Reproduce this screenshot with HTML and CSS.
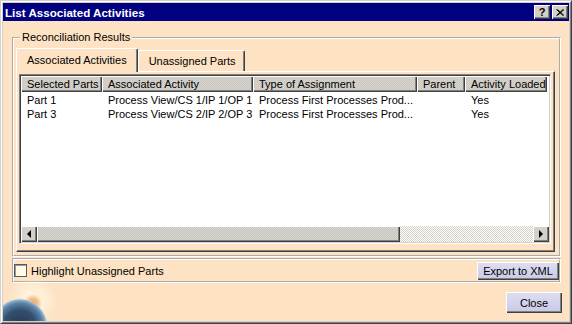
FILE: index.html
```html
<!DOCTYPE html>
<html lang="en">
<head>
  <meta charset="UTF-8" />
  <meta name="viewport" content="width=device-width, initial-scale=1.0"/>
  <title>List Associated Activities</title>
  <link rel="stylesheet" href="styles.css">
</head>
<body>
  <div class="window">
    <div class="titlebar">
      <span class="title">List Associated Activities</span>
      <div class="caption-buttons">
        <span class="caption-btn">?</span>
        <span class="caption-btn">
          <svg width="8" height="7" viewBox="0 0 8 7">
            <path d="M0.5 0.5 L7 6.5 M1.5 0.5 L8 6.5 M7 0.5 L0.5 6.5 M8 0.5 L1.5 6.5" stroke="#000" stroke-width="1" fill="none"/>
          </svg>
        </span>
      </div>
    </div>

    <div class="client">
      <fieldset class="group">
        <legend>Reconciliation Results</legend>

        <div class="tabs">
          <div class="tab active">Associated Activities</div>
          <div class="tab">Unassigned Parts</div>
        </div>

        <div class="panel">
          <div class="list">
            <div class="grid-area">
              <table class="grid">
                <colgroup>
                  <col style="width: 81px">
                  <col style="width: 151px">
                  <col style="width: 164px">
                  <col style="width: 48px">
                  <col style="width: 82px">
                </colgroup>
                <thead>
                  <tr>
                    <th>Selected Parts</th>
                    <th>Associated Activity</th>
                    <th>Type of Assignment</th>
                    <th>Parent</th>
                    <th>Activity Loaded</th>
                  </tr>
                </thead>
                <tbody>
                  <tr>
                    <td>Part 1</td>
                    <td>Process View/CS 1/IP 1/OP 1</td>
                    <td>Process First Processes Prod...</td>
                    <td></td>
                    <td>Yes</td>
                  </tr>
                  <tr>
                    <td>Part 3</td>
                    <td>Process View/CS 2/IP 2/OP 3</td>
                    <td>Process First Processes Prod...</td>
                    <td></td>
                    <td>Yes</td>
                  </tr>
                </tbody>
              </table>
            </div>

            <div class="hscroll">
              <span class="sb-btn"><span class="arrow left"></span></span>
              <span class="sb-thumb"></span>
              <span class="sb-track"></span>
              <span class="sb-btn"><span class="arrow right"></span></span>
            </div>
          </div>
        </div>
      </fieldset>

      <div class="options">
        <label class="check"><span class="box"></span>Highlight Unassigned Parts</label>
        <button class="btn export">Export to XML</button>
      </div>

      <div class="footer">
        <button class="btn close">Close</button>
      </div>

      <div class="globe"></div>
    </div>
  </div>
</body>
</html>
```

FILE: styles.css
```css
* {
  box-sizing: border-box;
}

body {
  margin: 0;
  font-family: "Liberation Sans", Arial, sans-serif;
  font-size: 11px;
  color: #000;
  background: #d4d0c8;
}

.window {
  width: 572px;
  height: 324px;
  display: flex;
  flex-direction: column;
  padding: 2px;
  background: #d4d0c8;
  border: 1px solid;
  border-color: #d4d0c8 #404040 #404040 #d4d0c8;
  box-shadow: inset 1px 1px 0 #fff, inset -1px -1px 0 #808080;
}

/* title bar */
.titlebar {
  height: 18px;
  flex-shrink: 0;
  display: flex;
  align-items: center;
  justify-content: space-between;
  padding: 0 1px 0 2px;
  background: #000080;
}

.title {
  color: #fff;
  font-weight: bold;
  font-size: 11.6px;
}

.caption-buttons {
  display: flex;
  gap: 2px;
}

.caption-btn {
  width: 16px;
  height: 14px;
  display: flex;
  align-items: center;
  justify-content: center;
  background: #d4d0c8;
  font-weight: bold;
  font-size: 11px;
  line-height: 1;
  box-shadow: inset 1px 1px 0 #fff, inset -1px -1px 0 #404040, inset -2px -2px 0 #808080;
}

/* dialog body */
.client {
  flex: 1;
  position: relative;
  display: flex;
  flex-direction: column;
  background: #fde3c3;
  overflow: hidden;
}

.group {
  margin: 10px 8px 0 9px;
  padding: 4px 4px 3px 2px;
  border: 2px groove #fff;
  min-width: 0;
}

.group legend {
  margin-left: 4px;
  padding: 0 2px;
  line-height: 13px;
}

/* tabs */
.tabs {
  height: 23px;
  display: flex;
  align-items: flex-start;
}

.tab {
  height: 21px;
  margin-top: 2px;
  padding: 0 9px 0 10px;
  display: flex;
  align-items: center;
  background: #fde3c3;
  border-top: 1px solid #fff;
  border-left: 1px solid #fff;
  border-right: 1px solid #404040;
  border-radius: 2px 2px 0 0;
  box-shadow: inset -1px 0 0 #808080;
}

.tab.active {
  height: 24px;
  margin-top: 0;
  padding: 0 10px 2px;
  position: relative;
  z-index: 1;
}

.panel {
  height: 181px;
  padding: 2px 3px 5px 2px;
  border-top: 1px solid #fff;
  border-left: 1px solid #fff;
  border-right: 1px solid #404040;
  border-bottom: 1px solid #404040;
  box-shadow: inset -1px -1px 0 #808080;
}

/* list view */
.list {
  height: 170px;
  display: flex;
  flex-direction: column;
  border: 1px solid;
  border-color: #808080 #fff #fff #808080;
  box-shadow: inset 1px 1px 0 #404040, inset -1px -1px 0 #d4d0c8;
  padding: 1px;
}

.grid-area {
  flex: 1;
  background: #fff;
}

.grid {
  width: 526px;
  table-layout: fixed;
  border-collapse: collapse;
}

.grid th {
  height: 16px;
  padding: 0 4px 0 6px;
  text-align: left;
  font-weight: normal;
  white-space: nowrap;
  overflow: hidden;
  background: repeating-conic-gradient(#d8d5ce 0 25%, #cac7c0 0 50%) 0 0 / 2px 2px;
  box-shadow: inset 1px 1px 0 #fff, inset -1px -1px 0 #404040, inset -2px -2px 0 #808080;
}

.grid td {
  height: 14px;
  padding: 0 6px;
  line-height: 14px;
  white-space: nowrap;
  overflow: hidden;
}

.grid tbody tr:first-child td {
  padding-top: 1px;
}

/* horizontal scroll bar */
.hscroll {
  height: 16px;
  display: flex;
}

.sb-btn {
  width: 16px;
  display: flex;
  align-items: center;
  justify-content: center;
  background: #d4d0c8;
  box-shadow: inset 1px 1px 0 #fff, inset -1px -1px 0 #404040, inset -2px -2px 0 #808080;
}

.arrow {
  width: 0;
  height: 0;
  border-top: 4px solid transparent;
  border-bottom: 4px solid transparent;
}

.arrow.left {
  border-right: 4px solid #000;
}

.arrow.right {
  border-left: 4px solid #000;
}

.sb-thumb {
  width: 363px;
  background: repeating-conic-gradient(#d8d5ce 0 25%, #cac7c0 0 50%) 0 0 / 2px 2px;
  box-shadow: inset 1px 1px 0 #fff, inset -1px -1px 0 #404040, inset -2px -2px 0 #808080;
}

.sb-track {
  flex: 1;
  background: repeating-conic-gradient(#fff 0 25%, #d4d0c8 0 50%) 0 0 / 2px 2px;
}

/* checkbox row */
.options {
  height: 25px;
  margin: 1px 8px 0 9px;
  display: flex;
  align-items: center;
  justify-content: space-between;
  border: 2px groove #fff;
}

.check {
  display: flex;
  align-items: center;
  gap: 4px;
}

.box {
  width: 13px;
  height: 13px;
  background: #fffbe6;
  border: 1px solid #5a5a5a;
  box-shadow: inset 1px 1px 0 #a09a90;
}

.btn {
  font-family: "Liberation Sans", Arial, sans-serif;
  font-size: 11px;
  color: #000;
  border: 0;
  padding: 0;
  background: linear-gradient(#dedef2, #c9c9e6);
  box-shadow: inset 1px 1px 0 #fff, inset -1px -1px 0 #404040, inset -2px -2px 0 #808080;
}

.btn.export {
  width: 82px;
  height: 18px;
}

.footer {
  display: flex;
  justify-content: flex-end;
  padding: 9px 7px 0;
}

.btn.close {
  width: 56px;
  height: 21px;
}

/* decorative planet in the corner */
.globe {
  position: absolute;
  left: 0;
  bottom: 0;
  width: 60px;
  height: 40px;
  background:
    radial-gradient(circle 28px at 17px 45px, #24344c 0, #34506f 16px, #5a82a8 23px, #92b2cc 26px, rgba(200, 218, 228, 0.6) 27px, transparent 28px),
    radial-gradient(circle 9px at 30px 22px, #f29a48 0, rgba(242, 160, 80, 0.6) 5px, transparent 9px),
    radial-gradient(circle 24px at 30px 20px, rgba(255, 252, 235, 0.95) 0, rgba(255, 240, 210, 0) 24px);
}
```
